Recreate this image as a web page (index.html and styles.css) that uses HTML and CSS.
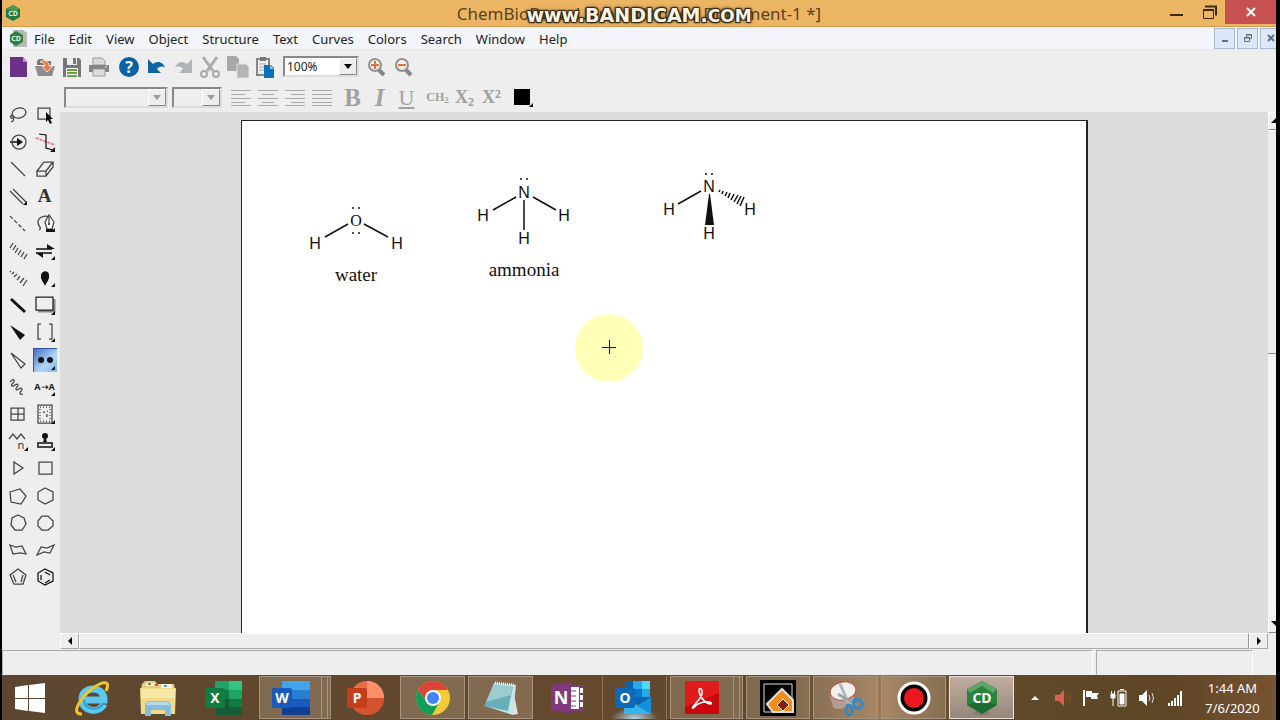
FILE: index.html
```html
<!DOCTYPE html>
<html lang="en">
<head>
    <meta charset="UTF-8">
    <meta name="viewport" content="width=device-width, initial-scale=1.0">
    <title>ChemBioDraw Ultra</title>
    <link rel="stylesheet" href="styles.css">
</head>
<body>
    <header class="titlebar">
        <svg class="app-icon" width="18" height="18" viewBox="0 0 18 18"><path d="M9 1l7 4v8l-7 4-7-4V5z" fill="#23773f"/><path d="M9 1l7 4-7 3-7-3z" fill="#4a9a55"/><text x="9" y="12" class="logo-small">CD</text></svg>
        <h1 class="title">ChemBioDraw Ultra - [Untitled Document-1 *]</h1>
        <div class="watermark">www.<b>BANDICAM</b>.<small>COM</small></div>
        <div class="window-buttons">
            <button class="win" aria-label="Minimize"><svg width="14" height="14"><path d="M0 10h13" stroke="#3b2a12" stroke-width="2"/></svg></button>
            <button class="win" aria-label="Restore"><svg width="16" height="16" fill="none" stroke="#3b2a12"><path d="M2.500 5.500h10v9h-10z"/><path d="M2 6h11M4 2.500h11v9" stroke-width="2"/></svg></button>
            <button class="win win-close" aria-label="Close"><svg width="12" height="12"><path d="M2 2l8 8M10 2l-8 8" stroke="#fff" stroke-width="2"/></svg></button>
        </div>
    </header>

    <nav class="menubar">
        <svg class="doc-icon" width="18" height="18" viewBox="0 0 18 18"><path d="M4 1h10l4 3v14H4z" fill="#b7bab7"/><path d="M7 2l7 4v7l-7 4-6-4V6z" fill="#2b8140"/><text x="7" y="12" class="logo-small">CD</text></svg>
        <a href="#">File</a>
        <a href="#">Edit</a>
        <a href="#">View</a>
        <a href="#">Object</a>
        <a href="#">Structure</a>
        <a href="#">Text</a>
        <a href="#">Curves</a>
        <a href="#">Colors</a>
        <a href="#">Search</a>
        <a href="#">Window</a>
        <a href="#">Help</a>
        <div class="doc-buttons">
            <button aria-label="Minimize document"><svg width="10" height="10"><path d="M2 8h6" stroke="#5d7087" stroke-width="2"/></svg></button>
            <button aria-label="Restore document"><svg width="10" height="10" fill="none" stroke="#5d7087"><path d="M1.500 4.500h5v4h-5zM3.500 4V1.500h5v4H7M1 5h6M3 2h6"/></svg></button>
            <button aria-label="Close document"><svg width="10" height="10"><path d="M2 2l6 6M8 2l-6 6" stroke="#5d7087" stroke-width="2"/></svg></button>
        </div>
    </nav>

    <div class="toolbar">
        <button class="tb" aria-label="New"><svg width="24" height="24"><path d="M4 2h13l4 5v15H4z" fill="#6a3188"/><path d="M17 2v5h4z" fill="#b893c9"/></svg></button>
        <button class="tb" aria-label="Open"><svg width="24" height="24"><path d="M4 6l2-2h4l2 2h6v4H4z" fill="#777"/><path d="M2 11h20l-3 10H5z" fill="#8d8d8d"/><path d="M7 7c4-3 9-1 9 4h4l-6 6-5-6h3c0-2-2-4-5-4z" fill="#ec7543" stroke="#f6dccb"/></svg></button>
        <button class="tb" aria-label="Save"><svg width="24" height="24"><path d="M3 3h16l2 2v17H3z" fill="#777"/><path d="M7 3h10v7H7z" fill="#eee"/><path d="M13 3h3v6h-3z" fill="#777"/><path d="M6 13h12v9H6z" fill="#fff"/><path d="M7 15h10M7 18h10M7 21h10" stroke="#65a63c" stroke-width="2"/></svg></button>
        <button class="tb" aria-label="Print"><svg width="24" height="24"><path d="M6 3h9l3 3v4H6z" fill="#d9d9d9" stroke="#999"/><path d="M2 10h20v7H2z" fill="#858585"/><path d="M6 14h12v7H6z" fill="#ddd" stroke="#999"/><path d="M18 12h2" stroke="#ddd"/></svg></button>
        <button class="tb tb-help" aria-label="Help"><svg width="24" height="24"><circle cx="12" cy="12" r="10" fill="#0a62a5"/><text x="12" y="18" class="help-mark">?</text></svg></button>
        <button class="tb" aria-label="Undo"><svg width="24" height="24"><path d="M4 4v14h13l-4-4c3-3 6-3 8-1-1-6-8-8-12-4z" fill="#0b66a8"/></svg></button>
        <button class="tb" aria-label="Redo"><svg width="24" height="24"><path d="M21 4v14H8l4-4c-3-3-6-3-8-1 1-6 8-8 12-4z" fill="#b1b4b6"/></svg></button>
        <button class="tb" aria-label="Cut"><svg width="24" height="24" fill="none" stroke="#aaa" stroke-width="2"><path d="M5 2l10 14M19 2L9 16" stroke-width="3"/><circle cx="6" cy="19" r="3"/><circle cx="18" cy="19" r="3"/></svg></button>
        <button class="tb" aria-label="Copy"><svg width="24" height="24"><path d="M2 1h9l3 3v12H2z" fill="#a8a8a8"/><path d="M12 9h9l3 3v11H12z" fill="#b2b5b8" stroke="#ddd"/></svg></button>
        <button class="tb" aria-label="Paste"><svg width="24" height="24"><path d="M5 4h12v16H5z" fill="#eee" stroke="#858585" stroke-width="2"/><path d="M8 2h6v4H8z" fill="#777"/><path d="M7 9h7M7 12h7M7 15h7" stroke="#aaa"/><path d="M12 10h7l3 3v10H12z" fill="#0872b9"/><path d="M18 10v4h4z" fill="#8dc2e4"/></svg></button>
        <div class="combo combo-zoom">
            <select aria-label="Zoom"><option>100%</option></select>
            <span class="arrow"></span>
        </div>
        <button class="tb" aria-label="Zoom in"><svg width="24" height="24" fill="none"><path d="M15 15l5 5" stroke="#858585" stroke-width="4"/><circle cx="11" cy="10" r="6" fill="#f8eee8" stroke="#909090" stroke-width="2"/><path d="M7 10h8M11 6v8" stroke="#e07043" stroke-width="2"/></svg></button>
        <button class="tb" aria-label="Zoom out"><svg width="24" height="24" fill="none"><path d="M15 15l5 5" stroke="#858585" stroke-width="4"/><circle cx="11" cy="10" r="6" fill="#f8eee8" stroke="#909090" stroke-width="2"/><path d="M7 10h8" stroke="#e07043" stroke-width="2"/></svg></button>
    </div>

    <main class="main">
        <div class="palette">
            <button aria-label="Lasso"><svg><ellipse cx="13" cy="10" rx="7" ry="5" transform="rotate(-12 13 10)"/><path d="M6 12c-3 1-1 4 1 3s0-3-2-2M7 15c1 1 1 3-2 4"/></svg></button>
            <button aria-label="Marquee"><svg><path d="M5 5h12v11H5z"/><path class="solid" d="M13 9v10l2-2 2 4 2-1-2-4h3z"/></svg></button>
            <button aria-label="Rotate"><svg><circle cx="13" cy="12" r="7"/><path d="M4 12h8" stroke-width="2"/><path class="solid" d="M11 8l6 4-6 4z"/></svg></button>
            <button aria-label="Fragment"><svg><path d="M3 8l19 7" stroke="#ee7f95" stroke-width="2" stroke-dasharray="3 1"/><path d="M6 4l7 1v13l7 2" stroke="#111"/><path class="solid" d="M22 17v5h-5z"/></svg></button>
            <button aria-label="Solid bond"><svg><path d="M5 5l14 14"/></svg></button>
            <button aria-label="Eraser"><svg><path d="M4 14l7-9h9l-7 9zM4 14v5h9v-5M13 19l7-9V5"/></svg></button>
            <button aria-label="Multiple bonds"><svg><path d="M4 7l13 13M7 5l13 13"/><path class="solid" d="M21 17v4h-4z"/></svg></button>
            <button class="tool-text" aria-label="Text">A</button>
            <button aria-label="Dashed bond"><svg><path d="M4 5l15 15" stroke-dasharray="4 2"/></svg></button>
            <button aria-label="Pen"><svg><path d="M6 19c4-2-2-4-1-9 1-4 7-6 11-4"/><path d="M16 4l-4 7 2 7h5l2-7z" fill="#fff"/><path d="M16 5v7"/><circle class="solid" cx="16" cy="13" r="1"/><path class="solid" d="M13 18h7v3h-7zM22 17v4h-4z"/></svg></button>
            <button aria-label="Hashed bond"><svg><path d="M4 9l3-5M7 11l3-5M9 14l3-5M12 16l3-5M15 18l3-5M18 20l3-5"/></svg></button>
            <button aria-label="Arrows"><svg><path d="M3 10h16M3 14h16" stroke-width="2"/><path class="solid" d="M14 5l8 5h-8zM10 19l-7-5h7zM22 17v4h-4z"/></svg></button>
            <button aria-label="Hashed wedged bond"><svg><path d="M4 6l1-1M6 8l2-2M8 11l3-3M11 14l3-4M14 17l4-5M17 20l4-6"/></svg></button>
            <button aria-label="Orbital"><svg><path class="solid" d="M12 20c-1-3-5-7-4-11 1-5 8-5 8 0 1 4-3 8-4 11zM22 17v4h-4z"/></svg></button>
            <button aria-label="Bold bond"><svg><path d="M5 6l14 13" stroke="#111" stroke-width="3"/></svg></button>
            <button aria-label="Drawing elements"><svg><path d="M5 18h16V6" stroke="#888" stroke-width="3"/><path d="M3 4h17v13H3z" fill="#eee" stroke="#222"/><path class="solid" d="M22 18v4h-4z"/></svg></button>
            <button aria-label="Wedged bond"><svg><path class="solid" d="M4 5l15 10-5 5z"/></svg></button>
            <button aria-label="Brackets"><svg><path d="M8 4H5v15h3M16 4h3v15h-3"/><path class="solid" d="M22 18v4h-4z"/></svg></button>
            <button aria-label="Hollow wedged bond"><svg><path d="M5 5l14 11-4 4z"/></svg></button>
            <button class="selected" aria-label="Lone pair"><svg><circle class="solid" cx="8" cy="12" r="3"/><circle class="solid" cx="17" cy="12" r="3"/><path class="solid" d="M22 18v4h-4z"/></svg></button>
            <button aria-label="Wavy bond"><svg><path d="M4 7c3-4 6-2 3 1s-1 4 2 2 4 0 2 2-1 4 2 2 4 0 2 2-1 4 2 3"/></svg></button>
            <button class="tool-map" aria-label="Atom map">A<i>➝</i>A<svg class="corner"><path class="solid" d="M22 17v4h-4z"/></svg></button>
            <button aria-label="Table"><svg><path d="M5 6h13v12H5zM12 6v12M5 12h13"/></svg></button>
            <button aria-label="TLC plate"><svg><path d="M5 3h14v18H5z"/><path d="M7 5h10v14H7z" stroke-dasharray="1 2"/><path d="M10 10h2M14 9h1M14 12v3"/><path class="solid" d="M22 18v4h-4z"/></svg></button>
            <button aria-label="Chain"><svg><path d="M3 10l4-5 4 5 4-5 4 5"/><text x="15" y="20" class="chain-n">n</text><path class="solid" d="M22 18v4h-4z"/></svg></button>
            <button aria-label="Templates"><svg><circle class="solid" cx="12" cy="7" r="3"/><path class="solid" d="M11 9h2l1 5h-4z"/><path d="M5 14h14v4H5z" stroke-width="2"/><path class="solid" d="M22 18v4h-4z"/></svg></button>
            <button aria-label="Cyclopropane"><svg><path d="M8 6l9 6-9 6z"/></svg></button>
            <button aria-label="Cyclobutane"><svg><path d="M6 6h13v12H6z"/></svg></button>
            <button aria-label="Cyclopentane"><svg><path d="M4 8l10-3 6 7-5 8-10-2z"/></svg></button>
            <button aria-label="Cyclohexane"><svg><path d="M12 4l8 4v8l-8 4-7-4V8z"/></svg></button>
            <button aria-label="Cycloheptane"><svg><path d="M12 4l6 3 2 6-4 6H9l-4-5 1-7z"/></svg></button>
            <button aria-label="Cyclooctane"><svg><path d="M9 5h6l5 5v5l-5 4H9l-4-4v-5z"/></svg></button>
            <button aria-label="Chair left"><svg><path d="M4 7l6 2 6-1 4 8-6-1-7 1z"/></svg></button>
            <button aria-label="Chair right"><svg><path d="M21 7l-4 8-6-1-7 3 4-8 6 1z"/></svg></button>
            <button aria-label="Cyclopentadiene"><svg><path d="M12 4l8 6-3 9H8L4 10zM7 10l3 7M17 10l-2 7"/></svg></button>
            <button aria-label="Benzene"><svg class="dark"><path d="M12 4l8 4v8l-8 4-7-4V8zM12 7l5 3M17 15l-5 3M8 10v5"/></svg></button>
        </div>

        <div class="editor">
            <div class="formatbar">
                <div class="combo combo-font"><select aria-label="Font" disabled><option></option></select><span class="arrow"></span></div>
                <div class="combo combo-size"><select aria-label="Size" disabled><option></option></select><span class="arrow"></span></div>
                <div class="group">
                    <button class="tb" aria-label="Align left"><svg width="22" height="18"><path d="M1 1.500h20M1 5.500h14M1 9.500h20M1 13.500h14M1 16.500h20"/></svg></button>
                    <button class="tb" aria-label="Center"><svg width="22" height="18"><path d="M1 1.500h20M5 5.500h12M1 9.500h20M5 13.500h12M1 16.500h20"/></svg></button>
                    <button class="tb" aria-label="Align right"><svg width="22" height="18"><path d="M1 1.500h20M7 5.500h14M1 9.500h20M7 13.500h14M1 16.500h20"/></svg></button>
                    <button class="tb" aria-label="Justify"><svg width="22" height="18"><path d="M1 1.500h20M1 5.500h20M1 9.500h20M1 13.500h20M1 16.500h20"/></svg></button>
                </div>
                <div class="group">
                    <button class="tb letter"><b>B</b></button>
                    <button class="tb letter"><b><i>I</i></b></button>
                    <button class="tb letter"><u>U</u></button>
                </div>
                <div class="group">
                    <button class="tb formula">CH<small>2</small></button>
                    <button class="tb script">X<sub>2</sub></button>
                    <button class="tb script">X<sup>2</sup></button>
                </div>
                <button class="tb" aria-label="Color"><svg width="20" height="20"><path d="M1 1h16v16H1z" fill="#000" stroke="none"/><path d="M20 15v4h-4z" fill="#000" stroke="none"/></svg></button>
            </div>

            <div class="viewport">
                <div class="workspace">
                    <div class="page">
                        <svg class="drawing">
                            <!-- water -->
                            <g transform="translate(114 99)">
                                <text class="serif" x="0" y="6">O</text>
                                <text x="-41" y="29">H</text>
                                <text x="41" y="29">H</text>
                                <path d="M-31 17L-8 4M8 4l24 13"/>
                                <path class="dots" d="M-3 -12h0M3 -12h0M-3 13h0M3 13h0"/>
                                <text class="name" x="0" y="61">water</text>
                            </g>
                            <!-- ammonia -->
                            <g transform="translate(282 70)">
                                <text x="0" y="7">N</text>
                                <text x="-41" y="30">H</text>
                                <text x="40" y="30">H</text>
                                <text x="0" y="53">H</text>
                                <path d="M-31 19L-8 6M9 6l23 13M0 9v30"/>
                                <path class="dots" d="M-3 -12h0M3 -12h0"/>
                                <text class="name" x="0" y="85">ammonia</text>
                            </g>
                            <!-- ammonia with wedges -->
                            <g transform="translate(467 65)">
                                <text x="0" y="6">N</text>
                                <text x="-40" y="29">H</text>
                                <text x="41" y="29">H</text>
                                <text x="0" y="53">H</text>
                                <path d="M-31 18L-8 5"/>
                                <path class="wedge" d="M0 8h1l4 31h-9z"/>
                                <path d="M10 6l1-2M13 8l1-3M16 10l2-4M19 12l2-5M22 14l3-6M25 16l4-7M28 18l4-8M31 20l4-9"/>
                                <path class="dots" d="M-3 -12h0M3 -12h0"/>
                            </g>
                            <!-- pointer -->
                            <circle class="halo" cx="367" cy="227" r="34"/>
                            <path class="cross" d="M360 226.500h14M367.500 219v14"/>
                        </svg>
                    </div>
                </div>
                <div class="vscroll">
                    <button aria-label="Scroll up"><svg width="10" height="6"><path d="M5 0l5 5H0z"/></svg></button>
                    <div class="vthumb"></div>
                    <div class="vtrack"></div>
                    <button aria-label="Scroll down"><svg width="10" height="6"><path d="M5 5l5-5H0z"/></svg></button>
                </div>
            </div>

            <div class="hscroll">
                <button aria-label="Scroll left"><svg width="6" height="8"><path d="M5 0v8L1 4z"/></svg></button>
                <div class="hthumb"></div>
                <button aria-label="Scroll right"><svg width="6" height="8"><path d="M1 0v8l4-4z"/></svg></button>
            </div>
        </div>
    </main>

    <div class="statusbar">
        <div class="status-text"></div>
        <div class="status-info"></div>
    </div>

    <footer class="taskbar">
        <button class="start" aria-label="Start"><svg width="32" height="32" fill="#fff"><path d="M1 5l13-2v13H1zM15 3l16-2v15H15zM1 17h13v12L1 27zM15 17h16v14l-16-2z"/></svg></button>
        <div class="tasks">
            <button class="task" aria-label="Internet Explorer"><svg width="38" height="38" viewBox="0 0 38 38" fill="none"><path d="M31 25c-5 10-22 8-22-5S31 6 31 21H12" stroke="#5cc8ee" stroke-width="7"/><path d="M31 24c-6 8-19 8-20-3" stroke="#2a9dd6" stroke-width="2"/><path d="M9 35c-13 1 0-18 11-26S38 2 33 12" stroke="#f2c42b" stroke-width="3"/></svg></button>
            <button class="task" aria-label="File Explorer"><svg width="38" height="38"><path d="M3 5l3-3h10l2 3h17l1 6H2z" fill="#e6cd82"/><path d="M7 4h8v3H7zM22 5h11v4H22z" fill="#f8f5e8"/><path d="M9 5h3" stroke="#56a552" stroke-width="2"/><path d="M16 6h3" stroke="#d94d4b" stroke-width="2"/><path d="M25 7h3" stroke="#4f9fd0" stroke-width="2"/><path d="M1 9h36l-1 26H2z" fill="#f0da88"/><path d="M2 10h34v9H2z" fill="#f7e8a8"/><path d="M6 37V25l3-3h20l3 3v12h-6v-6H12v6z" fill="#86bddb"/><path d="M9 23h20l2 3H7z" fill="#b6dcec"/></svg></button>
            <button class="task" aria-label="Excel"><svg width="38" height="38"><path d="M10 2h27v34H10z" fill="#185c37"/><path d="M10 2h14v9H10z" fill="#21a366"/><path d="M24 2h13v9H24z" fill="#33c481"/><path d="M10 11h14v9H10z" fill="#107c41"/><path d="M24 11h13v9H24z" fill="#21a366"/><path d="M24 20h13v8H24z" fill="#107c41"/><rect x="0" y="9" width="20" height="20" rx="2" fill="#107c41"/><text x="10" y="24" class="office">X</text></svg></button>
            <button class="task open stacked" aria-label="Word"><svg width="38" height="38"><path d="M10 2h28v9H10z" fill="#41a5ee"/><path d="M10 11h28v9H10z" fill="#2b7cd3"/><path d="M10 20h28v8H10z" fill="#185abd"/><path d="M10 28h28v8H10z" fill="#103f91"/><rect x="0" y="9" width="20" height="20" rx="2" fill="#185abd"/><text x="10" y="24" class="office">W</text></svg></button>
            <button class="task" aria-label="PowerPoint"><svg width="38" height="38"><circle cx="20" cy="19" r="17" fill="#ed6c47"/><path d="M20 2a17 17 0 0 1 17 17H20z" fill="#ff8f6b"/><path d="M3 19h34a17 17 0 0 1-34 0z" fill="#d35230"/><rect x="0" y="9" width="20" height="20" rx="2" fill="#c43e1c"/><text x="10" y="24" class="office">P</text></svg></button>
            <button class="task open" aria-label="Chrome"><svg width="38" height="38"><circle cx="19" cy="19" r="17" fill="#f7c934"/><path d="M4 11a17 17 0 0 1 30 0H19l-5 13z" fill="#db4437"/><path d="M4 11a17 17 0 0 0 14 25l7-12-12-1z" fill="#0f9d58"/><circle cx="19" cy="19" r="8" fill="#fff"/><circle cx="19" cy="19" r="6" fill="#4285f4"/></svg></button>
            <button class="task open" aria-label="Notepad"><svg width="38" height="38"><path d="M30 6l6 29-6 1z" fill="#dce1dd"/><path d="M12 4l22 2-3 30-28-9z" fill="#c9e4e8"/><path d="M12 5l19 2-5 25L2 27z" fill="#66afb9"/><path d="M12 5l19 2-2 9L4 23z" fill="#9ccbd0"/><path d="M13 4l19 2" stroke="#eee" stroke-width="3" stroke-dasharray="1 1"/></svg></button>
            <button class="task" aria-label="OneNote"><svg width="38" height="38"><path d="M3 6l20-3v32L3 31z" fill="#80397b"/><path d="M23 6h13v26H23z" fill="#80397b"/><path d="M23 8h8v22h-8z" fill="#fff"/><path d="M23 12h5M23 17h5M23 22h5M23 27h5" stroke="#80397b"/><path d="M32 9h3v5h-3zM32 16h3v5h-3zM32 23h3v5h-3z" fill="#fff"/><text x="13" y="25" class="office onenote">N</text></svg></button>
            <button class="task glow" aria-label="Outlook"><svg width="38" height="38"><path d="M10 2h25v22H10z" fill="#0a64ad"/><path d="M18 2h9v8h-9z" fill="#28a8ea"/><path d="M27 2h8v8h-8z" fill="#50d9ff"/><path d="M18 10h9v8h-9z" fill="#0078d4"/><path d="M27 10h8v8h-8z" fill="#28a8ea"/><path d="M9 18l14 8 13-8v17H9z" fill="#1490df"/><path d="M9 19l27 16H9z" fill="#32b4ed"/><rect x="0" y="9" width="20" height="20" rx="2" fill="#0f68b7"/><text x="10" y="24" class="office">O</text></svg></button>
            <button class="task open stacked" aria-label="Acrobat"><svg width="38" height="38"><path d="M2 2h34v33H2z" fill="#c9070d"/><path d="M2 2h34v12L2 28z" fill="#e01b1b"/><path d="M10 29c-3 0 7-7 9-14 1-5-3-8-3-3 1 7 7 13 12 13 2-3-7-3-13 0-2 1-4 4-5 4z" fill="none" stroke="#fff" stroke-width="1.500"/></svg></button>
            <button class="task open" aria-label="Converter"><svg width="38" height="38"><path d="M1 1h36v36H1z" fill="#000"/><path d="M5 5h28v28H5z" fill="none" stroke="#ddd"/><path d="M8 25L23 10l11 11v12H14z" fill="#f18c1b" stroke="#ddd" stroke-width="2"/><path d="M18 26l6-6 6 6-6 6z" fill="#8e1915" stroke="#fff"/></svg></button>
            <button class="task open" aria-label="Snipping Tool"><svg width="38" height="38"><path d="M3 17l3 11c4 4 14 1 19-4l3-10z" fill="#b29d95"/><ellipse cx="16" cy="12" rx="13" ry="9" fill="#f2f0ef" stroke="#c34340" transform="rotate(-10 16 12)"/><path d="M13 5l10 22M11 15l18 12" stroke="#aeb8bf" stroke-width="3"/><path d="M12 15l15 10" stroke="#76818a"/><g fill="none" stroke="#3389c5" stroke-width="3"><ellipse cx="22" cy="31" rx="3" ry="5"/><ellipse cx="31" cy="25" rx="4" ry="5" transform="rotate(-35 31 25)"/></g></svg></button>
            <button class="task open" aria-label="Recorder"><svg width="38" height="38"><circle cx="19" cy="19" r="15" fill="#050505" stroke="#fff" stroke-width="3"/><circle cx="19" cy="19" r="10" fill="#ed171f"/></svg></button>
            <button class="task open active" aria-label="ChemBioDraw"><svg width="38" height="38"><ellipse cx="19" cy="34" rx="9" ry="2" fill="#897c71"/><path d="M19 2l15 8v16l-15 9-15-9V10z" fill="#28833b"/><path d="M19 2l15 8-4 4-11-7-12 7-3-4z" fill="#5fa36b"/><path d="M4 26l15-5 15 5-15 9z" fill="#1e6c31"/><text x="19" y="24" class="office">CD</text></svg></button>
        </div>
        <div class="tray">
            <button aria-label="Show hidden icons"><svg width="10" height="8"><path d="M1 6l4-4 4 4z" fill="#fff"/></svg></button>
            <button aria-label="Audio"><svg width="20" height="20" fill="none"><path d="M2 7h4l5-5v16l-5-5H2z" fill="#d96352"/><path d="M13 7q2 3 0 6M16 5q3 5 0 10" stroke="#994830"/></svg></button>
            <button aria-label="Action center"><svg width="20" height="20"><path d="M3 2v16" stroke="#fff" stroke-width="2"/><path d="M5 3h6v2h7l-2 3 1 3h-7V9H5z" fill="#fff"/></svg></button>
            <button aria-label="Battery"><svg width="20" height="20" fill="none" stroke="#fff"><path d="M9 3h8v15H9zM11 1.500h4"/><path d="M11 6h4v10h-4z" fill="#fff"/><path d="M2.500 3v4M5.500 3v4M4 9v9"/><path d="M2 6h4v4H2z" fill="#fff"/></svg></button>
            <button aria-label="Volume"><svg width="20" height="20" fill="none"><path d="M2 7h3l5-5v16l-5-5H2z" fill="#fff"/><path d="M12 7q2 3 0 6M15 5q3 5 0 10" stroke="#ddd"/></svg></button>
            <button aria-label="Network"><svg width="20" height="20"><path d="M4 18v-3M7 18v-5M10 18v-8M13 18V7M16 18V3" stroke="#fff" stroke-width="2"/></svg></button>
            <div class="clock"><span>1:44 AM</span><span>7/6/2020</span></div>
        </div>
    </footer>
</body>
</html>
```
FILE: styles.css
```css
* { box-sizing: border-box; }
body { margin: 0; padding: 0 4px 0 2px; height: 100vh; display: flex; flex-direction: column; overflow: hidden; background: #000; color: #222; font-family: "Noto Sans", "Open Sans", sans-serif; }
button { display: flex; align-items: center; justify-content: center; padding: 0; border: 0; background: none; color: inherit; font-family: inherit; }
svg { display: block; flex: none; }

/* title bar */
.titlebar { position: relative; flex: none; display: flex; align-items: center; justify-content: center; height: 27px; background: #ecb563; border-bottom: 1px solid #d29b50; }
.app-icon { position: absolute; left: 2px; top: 4px; }
.logo-small { fill: #e5f4e3; font-size: 7px; font-weight: bold; text-anchor: middle; }
.title { margin: 0; padding-top: 2px; font-size: 17px; line-height: 24px; font-weight: normal; color: #5b421e; white-space: nowrap; }
.watermark { position: absolute; top: 3px; left: 0; right: 0; text-align: center; font: bold 19px/24px "DejaVu Sans", sans-serif; color: #f8f4e8; text-shadow: 1px 1px 1px #33230d, -1px -1px 1px #33230d, 1px -1px 1px #33230d, -1px 1px 1px #33230d, 0 0 4px #33230d; }
.watermark small { font-size: 17px; }
.window-buttons { position: absolute; right: 0; top: 0; display: flex; }
.win { width: 32px; height: 24px; }
.win-close { width: 51px; background: #c75050; }

/* menu */
.menubar { flex: none; display: flex; align-items: center; height: 23px; background: #f3f5fa; border-bottom: 1px solid #e8eaee; }
.doc-icon { margin-left: 7px; }
.menubar a { padding: 2px 7px 0; font-size: 13px; line-height: 22px; color: #222; text-decoration: none; }
.doc-buttons { display: flex; gap: 2px; margin-left: auto; overflow: hidden; width: 62px; }
.doc-buttons button { flex: none; width: 21px; height: 21px; border: 1px solid #a9bad0; background: #dce8f7; }

/* toolbars */
.toolbar { flex: none; display: flex; align-items: center; height: 33px; padding-left: 2px; background: #eee; }
.tb { flex: none; width: 27px; height: 26px; }
.tb-help { margin-left: 3px; }
.help-mark { fill: #fff; font-size: 16px; font-weight: bold; text-anchor: middle; }
.combo { position: relative; flex: none; height: 21px; border: 2px solid; border-color: #888 #ddd #ddd #888; }
.combo select { appearance: none; display: block; width: 100%; height: 100%; padding: 0 0 0 2px; border: 0; border-radius: 0; background: transparent; color: #222; font: 12px "Noto Sans", sans-serif; }
.arrow { position: absolute; right: 0; top: 0; bottom: 0; width: 18px; display: flex; align-items: center; justify-content: center; background: #eee; border: 1px solid; border-color: #fff #888 #888 #fff; pointer-events: none; }
.arrow::after { content: ""; border: 4px solid transparent; border-top: 5px solid #000; border-bottom: 0; }
.combo-zoom { width: 76px; margin: 0 3px 0 6px; background: #fff; }
.combo-font { width: 104px; }
.combo-size { width: 50px; margin-right: 1px; }
.combo-font .arrow::after, .combo-size .arrow::after { border-top-color: #999; }
.formatbar { flex: none; display: flex; align-items: center; gap: 4px; height: 29px; padding-left: 4px; background: #eee; }
.formatbar svg { stroke: #aaa; }
.group { display: flex; }
.letter { font: 25px "Liberation Serif", serif; color: #a0a0a0; }
.letter u { font-size: 22px; }
.formula, .script { font: bold 12px "Liberation Serif", serif; color: #a0a0a0; }
.formula small { font-size: 9px; align-self: flex-end; padding-bottom: 6px; }
.script { font-size: 18px; }
.script sub, .script sup { font-size: 12px; line-height: 12px; }
.script sub { padding-top: 8px; }
.script sup { padding-bottom: 8px; }

/* drawing tools */
.main { flex: 1; min-height: 0; display: flex; background: #eee; }
.palette { flex: none; display: grid; grid-template-columns: 27px 27px; grid-template-rows: repeat(18, 1fr); width: 58px; height: 508px; padding: 18px 0 0 2px; justify-items: center; align-items: center; }
.palette button { position: relative; width: 24px; height: 24px; }
.palette svg { width: 24px; height: 24px; fill: none; stroke: #444; stroke-width: 1.250; }
.palette .dark { stroke: #111; }
.palette .solid { fill: #111; stroke: none; }
.palette .selected { background: linear-gradient(135deg, #416fc7, #b3d5f6 60%, #80b2e8); border-top: 1px solid #3452a0; border-left: 1px solid #3452a0; }
.palette .tool-text { font: bold 19px "Liberation Serif", serif; color: #333; }
.palette .tool-map { font-size: 9px; font-weight: bold; }
.tool-map i { font-style: normal; }
.palette .corner { position: absolute; left: 0; top: 0; }
.palette .chain-n { fill: #333; stroke: none; font-size: 11px; text-anchor: middle; }

/* document */
.editor { flex: 1; min-width: 0; display: flex; flex-direction: column; }
.viewport { flex: 1; min-height: 0; display: flex; }
.workspace { flex: 1; min-width: 0; padding: 8px 14.8% 0 14.9%; background: #ddd; }
.page { height: 100%; background: #fff; border: 1px solid #222; border-right-width: 2px; border-bottom: 0; }
.drawing { width: 100%; height: 100%; stroke: #111; stroke-width: 1.500; fill: none; }
.drawing text { fill: #111; stroke: none; font: 16px "Liberation Sans", sans-serif; text-anchor: middle; }
.drawing .serif, .drawing .name { font-family: "Liberation Serif", serif; }
.drawing .name { font-size: 19px; }
.drawing .dots { stroke-width: 2; stroke-linecap: round; }
.drawing .wedge { fill: #111; stroke: none; }
.drawing .halo { fill: #ffffb8; stroke: none; }
.drawing .cross { stroke-width: 1; }

.vscroll { flex: none; display: flex; flex-direction: column; width: 8px; overflow: hidden; background: #f5f5f5; }
.vscroll button { flex: none; width: 16px; height: 18px; background: #eee; border: 1px solid; border-color: #fff #888 #888 #fff; }
.vthumb { flex: 46; border-top: 1px solid #fff; border-bottom: 1px solid #888; background: #eee; }
.vtrack { flex: 54; }
.hscroll { flex: none; display: flex; height: 16px; padding-right: 8px; background: #eee; }
.hscroll button { flex: none; width: 19px; border: 1px solid; border-color: #fff #aaa #aaa #fff; }
.hthumb { flex: 1; border: 1px solid; border-color: #fff #999 #aaa #fff; }

.statusbar { flex: none; display: flex; gap: 3px; height: 26px; padding: 1px 23px 0 0; background: #eee; }
.status-text { flex: 1; border: 1px solid; border-color: #aaa #fff #eee #aaa; }
.status-info { width: 157px; border: 1px solid; border-color: #aaa #fff #eee #aaa; }

/* taskbar */
.taskbar { flex: none; display: flex; height: 45px; color: #fff; background: linear-gradient(90deg, #5d4630, #64492d 45%, #5f482b 62%, #9b7650 69%, #604a2a 75%, #5e4627 92%, #775432); }
.start { width: 56px; margin-right: 3px; }
.tasks { flex: 1; min-width: 0; display: flex; gap: 3px; }
.task { position: relative; flex: 1 1 0; min-width: 0; margin: 1px 0; }
.open { background: rgba(190, 170, 145, 0.35); border: 1px solid #a69480; }
.stacked { padding-right: 8px; }
.stacked::after { content: ""; position: absolute; top: -1px; bottom: -1px; right: 2px; width: 5px; border: 1px solid #a69480; border-width: 0 1px; }
.active { background: linear-gradient(#c1ada0, #96877b); border-color: #eee1d8; }
.glow { background: radial-gradient(ellipse 24px 12px at 50% 100%, #b9d8ec, transparent); border-left: 1px solid #8b7459; border-right: 1px solid #8b7459; }
.office { fill: #fff; font-size: 14px; font-weight: bold; text-anchor: middle; }
.onenote { font-size: 18px; }
.tray { flex: none; display: flex; align-items: center; width: 262px; padding-left: 7px; }
.tray button { width: 28px; height: 40px; }
.clock { flex: 1; display: flex; flex-direction: column; align-items: center; font-size: 13px; line-height: 20px; }
```
